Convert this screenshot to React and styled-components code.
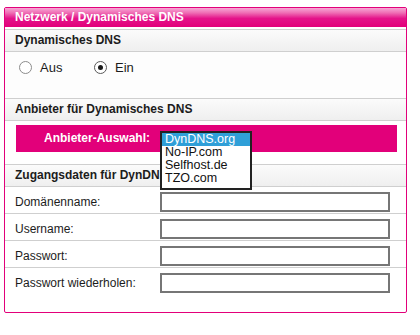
import React from 'react';
import styled, { createGlobalStyle } from 'styled-components';

const GlobalStyle = createGlobalStyle`
	body {
		margin: 0;
		background: #fff;
		font-family: 'Liberation Sans', Arial, sans-serif;
		font-size: 12px;
		color: #1c1c1c;
	}
`;

const Page = styled.div`
	padding: 7px 0 0 4px;
`;

const Panel = styled.div`
	width: 401px;
	border: 1px solid #e2007a;
	border-radius: 2px;
	background: #fff;
	padding-bottom: 18px;
`;

const Title = styled.div`
	height: 19px;
	line-height: 19px;
	padding-left: 10px;
	margin-bottom: 2px;
	font-weight: bold;
	color: #fff;
	background: linear-gradient(#f7a6d5 0%, #ef6fb5 25%, #e4138a 55%, #e2007a 100%);
`;

const SectionHeader = styled.div`
	height: 21px;
	line-height: 21px;
	padding-left: 10px;
	border-top: 1px solid #cfcfcf;
	border-bottom: 1px solid #cfcfcf;
	background: linear-gradient(#fbfbfb, #efefef);
	font-weight: bold;
	color: #1c1c1c;
	white-space: nowrap;
	overflow: hidden;
`;

const RadioGroup = styled.div`
	display: flex;
	align-items: flex-start;
	height: 46px;
	box-sizing: border-box;
	padding: 9px 0 0 14px;
	background: #fdfdfd;
`;

const RadioOption = styled.label`
	display: flex;
	align-items: center;
	gap: 8px;
	width: ${props => props.width}px;
	line-height: 13px;
	font-size: 13px;
`;

const RadioCircle = styled.span`
	position: relative;
	width: 11px;
	height: 11px;
	border-radius: 50%;
	border: 1px solid ${props => (props.checked ? '#5a5a5a' : '#8c8c8c')};
	background: #fff;

	&::after {
		content: '';
		display: ${props => (props.checked ? 'block' : 'none')};
		position: absolute;
		left: 3px;
		top: 3px;
		width: 5px;
		height: 5px;
		border-radius: 50%;
		background: #1a1a1a;
	}
`;

const ProviderBlock = styled.div`
	padding: 4px 9px 12px 11px;
`;

const ProviderBar = styled.div`
	display: flex;
	height: 27px;
	background: #e2007a;
`;

const ProviderLabel = styled.div`
	width: 134px;
	line-height: 27px;
	text-align: right;
	font-weight: bold;
	color: #fff;
	font-size: 12px;
`;

const SelectWrap = styled.div`
	position: relative;
	margin-left: 10px;
	width: 92px;
`;

/* opened drop-down, lies over the next section */
const ListBox = styled.ul`
	position: absolute;
	top: 6px;
	left: 0;
	z-index: 2;
	width: 88px;
	margin: 0;
	padding: 0 0 3px;
	list-style: none;
	border: 2px solid #222;
	background: #fff;
`;

const Option = styled.li`
	height: 13px;
	line-height: 13px;
	padding-left: 3px;
	font-size: 12.5px;
	color: ${props => (props.selected ? '#fff' : '#111')};
	background: ${props => (props.selected ? '#2f9fd8' : '#fff')};
`;

const FieldRow = styled.div`
	display: flex;
	align-items: flex-start;
	height: 26px;
	padding-left: 10px;
	border-bottom: ${props => (props.last ? 'none' : '1px solid #cfcfcf')};
`;

const FieldLabel = styled.div`
	width: 145px;
	margin-top: 5px;
	line-height: 20px;
	font-size: 12px;
	color: #1c1c1c;
`;

const TextInput = styled.input`
	width: 220px;
	height: 16px;
	margin: 5px 0 0;
	padding: 0 3px;
	border: 2px solid #767676;
	box-sizing: content-box;
	font-family: inherit;
	font-size: 12px;
	outline: none;
`;

const providers = ['DynDNS.org', 'No-IP.com', 'Selfhost.de', 'TZO.com'];

const fields = ['Domänenname:', 'Username:', 'Passwort:', 'Passwort wiederholen:'];

const App = () => {
	return (
		<Page>
			<GlobalStyle />
			<Panel>
				<Title>Netzwerk / Dynamisches DNS</Title>

				<SectionHeader>Dynamisches DNS</SectionHeader>
				<RadioGroup>
					<RadioOption width={75}>
						<RadioCircle />
						Aus
					</RadioOption>
					<RadioOption width={60}>
						<RadioCircle checked />
						Ein
					</RadioOption>
				</RadioGroup>

				<SectionHeader>Anbieter für Dynamisches DNS</SectionHeader>
				<ProviderBlock>
					<ProviderBar>
						<ProviderLabel>Anbieter-Auswahl:</ProviderLabel>
						<SelectWrap>
							<ListBox>
								{providers.map((p, i) => (
									<Option key={p} selected={i === 0}>
										{p}
									</Option>
								))}
							</ListBox>
						</SelectWrap>
					</ProviderBar>
				</ProviderBlock>

				<SectionHeader>Zugangsdaten für DynDNS.org</SectionHeader>
				{fields.map((f, i) => (
					<FieldRow key={f} last={i === fields.length - 1}>
						<FieldLabel>{f}</FieldLabel>
						<TextInput type={i >= 2 ? 'password' : 'text'} />
					</FieldRow>
				))}
			</Panel>
		</Page>
	);
};

export default App;
